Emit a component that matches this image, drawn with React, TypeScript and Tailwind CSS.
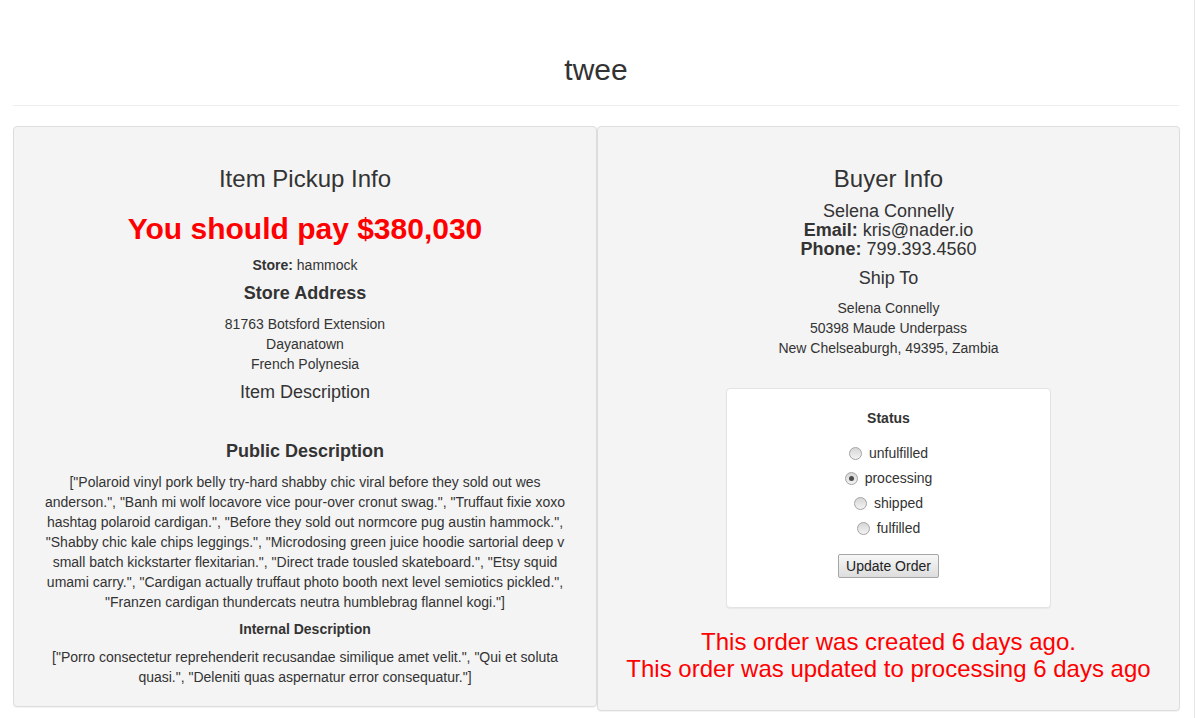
import React from "react";

const Radio = ({ checked }: { checked?: boolean }) => (
  <span className="relative inline-flex h-[13px] w-[13px] items-center justify-center rounded-full border border-[#a3a3a3] bg-gradient-to-b from-[#d6d6d6] to-[#f3f3f3]">
    {checked && <span className="h-[5px] w-[5px] rounded-full bg-[#4a4a4a]" />}
  </span>
);

export default function App() {
  const statuses = ["unfulfilled", "processing", "shipped", "fulfilled"];
  return (
    <div className="flex min-h-[718px] w-[1196px] bg-white font-['Liberation_Sans',Arial,sans-serif] text-[#333333]">
      <div className="w-[1195px] border-r border-[#e6e6e6] pl-[13px] pr-[15px]">
        <h1 className="mt-[53px] mb-[19px] text-center text-[30px] leading-[33px] font-normal">twee</h1>
        <div className="border-t border-[#eeeeee]" />
        <div className="mt-[20px] grid grid-cols-[584px_583px] items-start">
          {/* Left panel */}
          <div className="rounded-[4px] border border-[#dddddd] bg-[#f4f4f4] px-[19px] pt-[39px] pb-[19px] text-center shadow-[0_1px_1px_rgba(0,0,0,0.05)]">
            <h3 className="text-[24px] leading-[26px] font-normal">Item Pickup Info</h3>
            <h2 className="mt-[20px] text-[30px] leading-[33px] font-bold text-[#ff0000]">You should pay $380,030</h2>
            <p className="mt-[10px] text-[14px] leading-[20px]">
              <b>Store:</b> hammock
            </p>
            <h4 className="mt-[8px] text-[18px] leading-[20px] font-bold">Store Address</h4>
            <div className="mt-[11px] text-[14px] leading-[20px]">
              <div>81763 Botsford Extension</div>
              <div>Dayanatown</div>
              <div>French Polynesia</div>
            </div>
            <h4 className="mt-[8px] text-[18px] leading-[20px] font-normal">Item Description</h4>
            <h4 className="mt-[39px] text-[18px] leading-[20px] font-bold">Public Description</h4>
            <p className="mt-[11px] text-[14px] leading-[20px]">
              ["Polaroid vinyl pork belly try-hard shabby chic viral before they sold out wes anderson.", "Banh mi wolf locavore vice pour-over cronut swag.", "Truffaut fixie xoxo hashtag polaroid cardigan.", "Before they sold out normcore pug austin hammock.", "Shabby chic kale chips leggings.", "Microdosing green juice hoodie sartorial deep v small batch kickstarter flexitarian.", "Direct trade tousled skateboard.", "Etsy squid umami carry.", "Cardigan actually truffaut photo booth next level semiotics pickled.", "Franzen cardigan thundercats neutra humblebrag flannel kogi."]
            </p>
            <h5 className="mt-[7px] text-[14px] leading-[20px] font-bold">Internal Description</h5>
            <p className="mt-[8px] text-[14px] leading-[20px]">
              ["Porro consectetur reprehenderit recusandae similique amet velit.", "Qui et soluta quasi.", "Deleniti quas aspernatur error consequatur."]
            </p>
          </div>

          {/* Right panel */}
          <div className="rounded-[4px] border border-[#dddddd] bg-[#f4f4f4] px-[19px] pt-[39px] pb-[28px] text-center shadow-[0_1px_1px_rgba(0,0,0,0.05)]">
            <h3 className="text-[24px] leading-[26px] font-normal">Buyer Info</h3>
            <div className="mt-[10px] text-[18px] leading-[19px]">
              <div>Selena Connelly</div>
              <div>
                <b>Email:</b> kris@nader.io
              </div>
              <div>
                <b>Phone:</b> 799.393.4560
              </div>
            </div>
            <h4 className="mt-[9px] text-[18px] leading-[20px] font-normal">Ship To</h4>
            <div className="mt-[10px] text-[14px] leading-[20px]">
              <div>Selena Connelly</div>
              <div>50398 Maude Underpass</div>
              <div>New Chelseaburgh, 49395, Zambia</div>
            </div>
            <div className="mx-auto mt-[30px] w-[325px] rounded-[4px] border border-[#e3e3e3] bg-white pt-[19px] pb-[29px] shadow-[0_1px_1px_rgba(0,0,0,0.05)]">
              <div className="text-[14px] leading-[20px] font-bold">Status</div>
              <div className="mt-[13px]">
                {statuses.map((s) => (
                  <div key={s} className="flex h-[25px] items-center justify-center gap-[7px] text-[14px]">
                    <Radio checked={s === "processing"} />
                    <span>{s}</span>
                  </div>
                ))}
              </div>
              <button className="mt-[13px] h-[24px] rounded-[2px] border border-[#a6a6a6] bg-gradient-to-b from-[#f7f7f7] to-[#dddddd] px-[7px] text-[14px] leading-[20px] text-[#222222]">
                Update Order
              </button>
            </div>
            <div className="mt-[20px] text-[24px] leading-[27px] text-[#ff0000]">
              <div>This order was created 6 days ago.</div>
              <div>This order was updated to processing 6 days ago</div>
            </div>
          </div>
        </div>
      </div>
    </div>
  );
}
